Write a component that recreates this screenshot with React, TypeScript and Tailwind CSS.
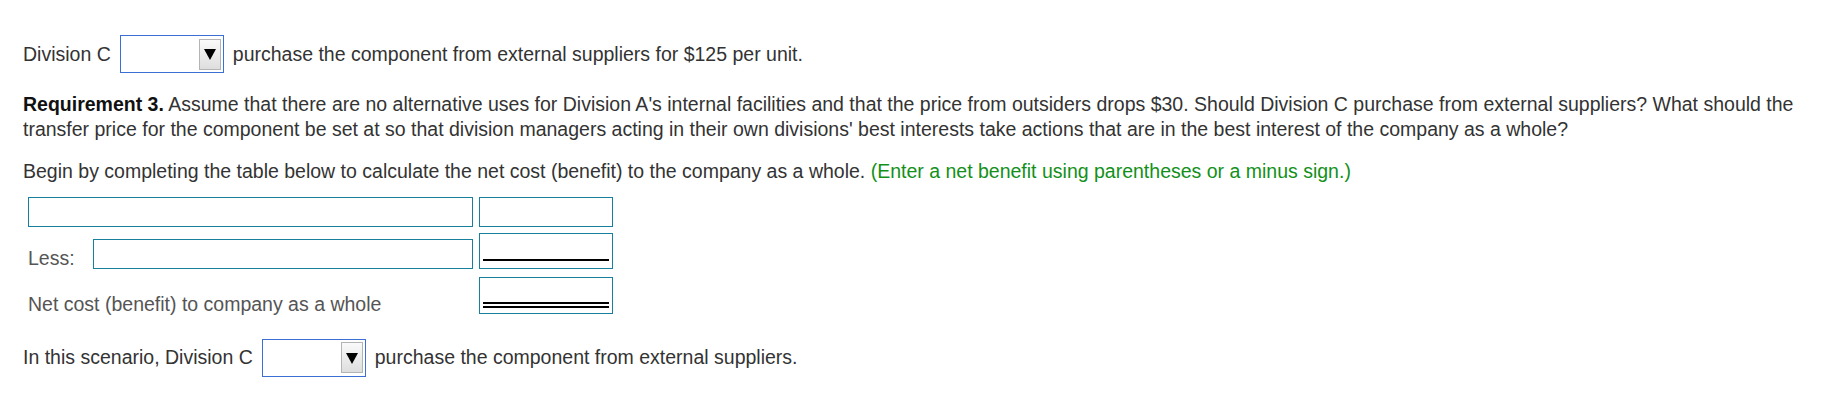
import React from "react";

const Dropdown = () => {
  return (
    <div className="w-[104px] h-[38px] border border-[#3b6fd4] bg-white flex items-center justify-end pr-[2px]">
      <div className="w-[22px] h-[31px] border border-[#b4b4b4] bg-gradient-to-b from-[#fafafa] to-[#dedede] flex items-center justify-center">
        <svg width="12" height="12" viewBox="0 0 12 12">
          <polygon points="0,1 12,1 6,12" fill="#000" />
        </svg>
      </div>
    </div>
  );
};

const Cell = ({ className = "" }: { className?: string }) => {
  return <div className={"border border-[#17809c] bg-white " + className} />;
};

const App = () => {
  return (
    <div className="w-[1833px] h-[407px] bg-white pl-[23px] pt-[35px] text-[19.5px] leading-[24.5px] text-[#333] font-['Liberation_Sans',Arial,sans-serif]">
      <div className="flex items-center gap-[9px]">
        <span>Division C</span>
        <Dropdown />
        <span>purchase the component from external suppliers for $125 per unit.</span>
      </div>

      <p className="mt-[19px] pr-[24px]">
        <span className="font-bold text-[#111]">Requirement 3.</span> Assume that there are no alternative uses for
        Division A's internal facilities and that the price from outsiders drops $30. Should Division C purchase from
        external suppliers? What should the transfer price for the component be set at so that division managers acting
        in their own divisions' best interests take actions that are in the best interest of the company as a whole?
      </p>

      <p className="mt-[18px]">
        Begin by completing the table below to calculate the net cost (benefit) to the company as a whole.{" "}
        <span className="text-[#13901a]">(Enter a net benefit using parentheses or a minus sign.)</span>
      </p>

      <div className="mt-[13px] ml-[5px] flex flex-col text-[#555]">
        <div className="flex gap-[6px]">
          <Cell className="w-[445px] h-[30px]" />
          <Cell className="w-[134px] h-[30px]" />
        </div>
        <div className="flex items-end gap-[6px] mt-[6px]">
          <div className="w-[445px] flex items-end">
            <span className="w-[65px] mb-[-2px]">Less:</span>
            <Cell className="flex-1 h-[30px]" />
          </div>
          <div className="w-[134px] h-[36px] border border-[#17809c] bg-white flex flex-col justify-end px-[3px] pb-[7px]">
            <div className="h-[1.5px] bg-black" />
          </div>
        </div>
        <div className="flex items-end gap-[6px] mt-[8px]">
          <div className="w-[445px] mb-[-3px]">Net cost (benefit) to company as a whole</div>
          <div className="w-[134px] h-[37px] border border-[#17809c] bg-white flex flex-col justify-end px-[3px] pb-[5px]">
            <div className="h-[2px] bg-black" />
            <div className="h-[1.5px]" />
            <div className="h-[2px] bg-black" />
          </div>
        </div>
      </div>

      <div className="mt-[25px] flex items-center gap-[9px]">
        <span>In this scenario, Division C</span>
        <Dropdown />
        <span>purchase the component from external suppliers.</span>
      </div>
    </div>
  );
};

export default App;
